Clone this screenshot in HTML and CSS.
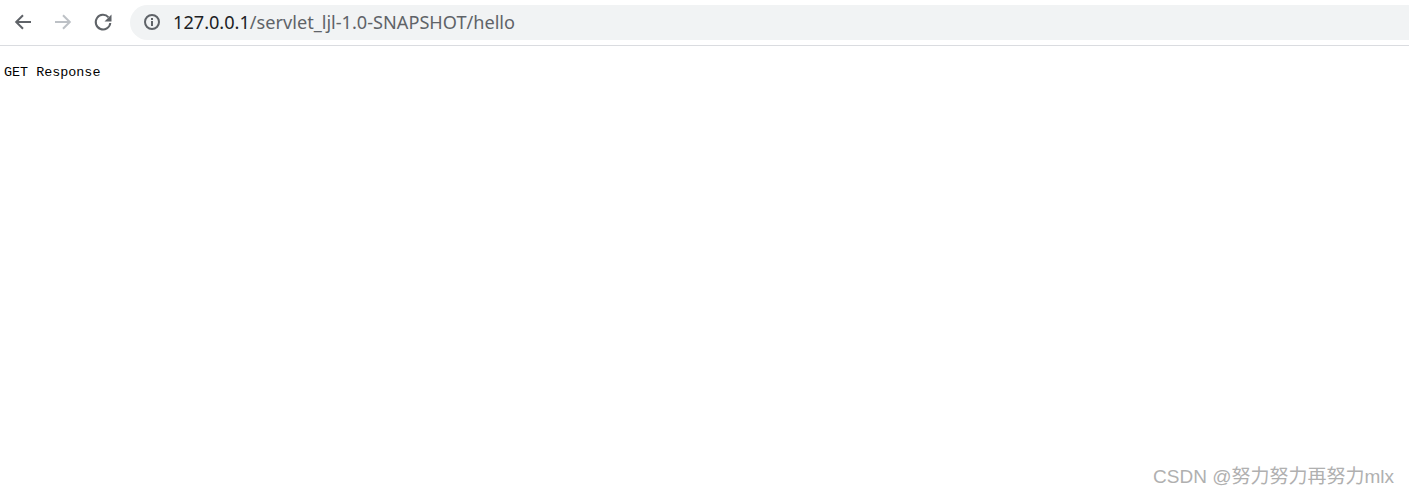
FILE: index.html
```html
<!DOCTYPE html>
<html lang="zh-CN">
<head>
    <meta charset="UTF-8">
    <title>127.0.0.1/servlet_ljl-1.0-SNAPSHOT/hello</title>
    <link rel="stylesheet" href="styles.css">
</head>
<body>
    <header class="toolbar">
        <div class="nav-buttons">
            <svg class="nav-icon" width="20" height="20" viewBox="0 0 20 20"><path d="M18 10H3.500M10 3.200 3.200 10l6.800 6.800" fill="none" stroke="#5f6368" stroke-width="2"/></svg>
            <svg class="nav-icon" width="20" height="20" viewBox="0 0 20 20"><path d="M2 10h15M10 3.200l6.800 6.800-6.800 6.800" fill="none" stroke="#bdc1c6" stroke-width="2"/></svg>
            <svg class="nav-icon" width="20" height="20" viewBox="0 0 20 20"><path d="M15.500 5.300A7.300 7.300 0 1 0 17.300 11" fill="none" stroke="#5f6368" stroke-width="2"/><path d="M18.500 2.500V9.500h-7z" fill="#5f6368"/></svg>
        </div>
        <div class="address-bar">
            <svg class="info-icon" width="18" height="18" viewBox="0 0 18 18"><circle cx="9" cy="9" r="7" fill="none" stroke="#5f6368" stroke-width="2"/><path d="M8 8h2v5H8zM8 5h2v2H8z" fill="#5f6368"/></svg>
            <span class="url"><span class="url-host">127.0.0.1</span>/servlet_ljl-1.0-SNAPSHOT/hello</span>
        </div>
    </header>
    <main class="page-body">
        <pre class="response">GET Response</pre>
    </main>
    <div class="watermark">CSDN @努力努力再努力mlx</div>
</body>
</html>
```

FILE: styles.css
```css
html, body {
    height: 100%;
}
body {
    margin: 0;
    background: #fff;
    display: flex;
    flex-direction: column;
    overflow: hidden;
}
.toolbar {
    display: flex;
    align-items: center;
    height: 45px;
    padding-left: 13px;
    border-bottom: 1px solid #dadce0;
    flex-shrink: 0;
}
.nav-buttons {
    display: flex;
    gap: 20px;
    margin-right: 17px;
    padding-bottom: 1px;
}
.address-bar {
    flex: 1;
    display: flex;
    align-items: center;
    height: 35px;
    padding-left: 13px;
    background: #f1f3f4;
    border-radius: 18px 0 0 18px;
}
.info-icon {
    margin-right: 12px;
    margin-bottom: 1px;
}
.url {
    font-family: "Noto Sans", "Open Sans", sans-serif;
    font-size: 18.150px;
    color: #5f6368;
    white-space: nowrap;
    margin-bottom: 2px;
}
.url-host {
    color: #202124;
}
.page-body {
    flex: 1;
    padding: 19px 4px 0;
}
.response {
    margin: 0;
    font-family: "Liberation Mono", monospace;
    font-size: 13.400px;
    line-height: 16px;
    color: #000;
}
.watermark {
    position: absolute;
    right: 15px;
    bottom: 7px;
    font-family: "Liberation Sans", "Noto Sans CJK SC", sans-serif;
    font-size: 19px;
    color: #b0b0b0;
    white-space: nowrap;
}
```
